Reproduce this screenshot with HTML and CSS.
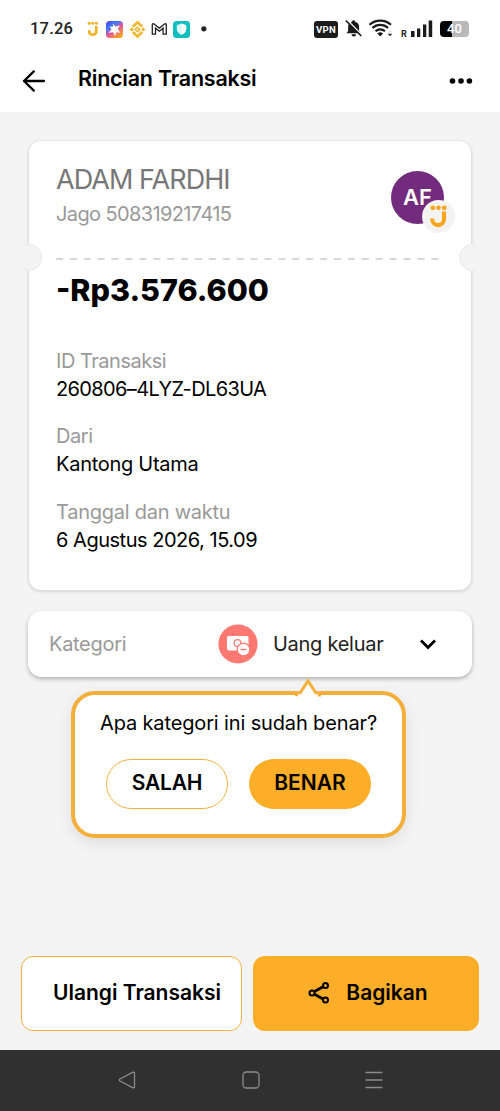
FILE: index.html
```html
<!DOCTYPE html>
<html lang="id">
<head>
<meta charset="utf-8">
<title>Rincian Transaksi</title>
<link rel="stylesheet" href="styles.css">
</head>
<body>
<div class="screen">
  <div class="status">
    <span class="clock">17.26</span>
    <svg class="notifs" width="124" height="20" viewBox="86 19 124 20">
      <defs>
        <linearGradient id="app" x1="0" y1="0" x2="0.7" y2="1">
          <stop offset="0" stop-color="#5b3df0"/><stop offset=".35" stop-color="#3c7df5"/><stop offset=".6" stop-color="#e0559a"/><stop offset="1" stop-color="#ffa51e"/>
        </linearGradient>
      </defs>
      <g fill="#f5b021"><circle cx="89.200" cy="23.200" r="1.500"/><circle cx="92.800" cy="23.200" r="1.500"/><circle cx="96.400" cy="23.200" r="1.500"/></g>
      <path d="M96.300 26v5.200a3.550 3.550 0 0 1-7.100 0v-.9" fill="none" stroke="#f5b021" stroke-width="2.700"/>
      <rect x="106" y="21" width="17" height="17" rx="3.500" fill="url(#app)"/>
      <path d="M112.800 23.500l2.700 3 4.300-1-2 3.800 2.600 3.400-4-.4-1.500 3.800-1.800-3.900-4.600.5 3-3.300-1.700-3 3.300.3z" fill="#fff"/>
      <g fill="none" stroke="#f0b62c" stroke-width="2.600"><path d="M132.800 26.800l4.700-4.400 4.700 4.400M132.800 32l4.700 4.400 4.700-4.400"/></g>
      <g fill="#f0b62c"><path d="M137.500 26l3.400 3.400-3.400 3.400-3.400-3.400zM131.800 27.200l2.200 2.200-2.200 2.200-2.200-2.200zM143.200 27.200l2.200 2.200-2.200 2.200-2.200-2.200z"/></g>
      <circle cx="137.500" cy="29.400" r="1" fill="#fff"/>
      <path d="M152.300 34.200V24.600q0-1 1.500-.8l5.500 4.300 5.500-4.300q1.500-.2 1.500.8v9.600h-3.200v-6l-3.800 3-3.800-3v6z" fill="#fff" stroke="#222" stroke-width="1.300"/>
      <rect x="173" y="21" width="17" height="17" rx="3.500" fill="#12bfc0"/>
      <path d="M181.500 23.600l4.700 1.700v3.700q0 3.800-4.700 5.800-4.700-2-4.700-5.800v-3.700z" fill="#d9fbfa"/><path d="M181.500 23.600l4.700 1.700v3.700q0 3.800-4.700 5.800z" fill="#fff"/>
      <circle cx="203.800" cy="28.800" r="2.600" fill="#222"/>
    </svg>
    <span class="grow"></span>
    <span class="vpn">VPN</span>
    <svg class="sys" width="94" height="20" viewBox="342 19 94 20">
      <path d="M346.500 33.200l1.600-2.200v-4a5.500 5.500 0 0 1 4-5.200v-.5a1.600 1.600 0 0 1 3 0v.5a5.500 5.500 0 0 1 4 5.200v4l1.600 2.200zM351.500 34.300h4.600a2.300 2.300 0 0 1-4.600 0z" fill="#1b1b1b"/>
      <path d="M347 19.800l15.500 16" stroke="#fff" stroke-width="1.600"/><path d="M345.800 20.500l15.500 15.500" stroke="#1b1b1b" stroke-width="1.700"/>
      <g fill="none" stroke="#1b1b1b" stroke-width="2.200"><path d="M369.500 24.700a16 16 0 0 1 21.500 0"/><path d="M372.400 28a11.500 11.500 0 0 1 15.700 0"/><path d="M375.500 31.200a7 7 0 0 1 9.500 0"/></g>
      <path d="M377.300 33.400a4.600 4.600 0 0 1 5.800 0l-2.900 3z" fill="#1b1b1b"/>
      <path d="M387.800 32.500l2.200-2.600 2.200 2.600z" fill="#ddd"/><path d="M387.800 33.800h4.400l-2.200 2.400z" fill="#222"/>
      <g fill="#1b1b1b"><rect x="411" y="31" width="3.600" height="6"/><rect x="417" y="28.500" width="3.300" height="8.500"/><rect x="423" y="24.500" width="3.300" height="12.500"/><rect x="428.700" y="20.500" width="3.500" height="16.500"/></g>
      <text x="401" y="37" class="roam">R</text>
    </svg>
    <span class="battery">40</span>
  </div>

  <div class="appbar">
    <svg width="24" height="24" viewBox="0 0 24 24" fill="none" stroke="#000" stroke-width="2.300" stroke-linecap="round" stroke-linejoin="round"><path d="M22 12H2M11.800 2.400L2 12l9.800 9.600"/></svg>
    <h1 class="title">Rincian Transaksi</h1>
    <svg width="24" height="8" viewBox="0 0 24 8"><circle cx="3.500" cy="4" r="2.800"/><circle cx="12" cy="4" r="2.800"/><circle cx="20.400" cy="4" r="2.800"/></svg>
  </div>

  <main class="main">
    <section class="receipt">
      <div class="payee">
        <div>
          <div class="name">ADAM FARDHI</div>
          <div class="account">Jago 508319217415</div>
        </div>
        <div class="avatar"><span class="initials">AF</span>
          <svg class="badge" width="33" height="33" viewBox="0 0 33 33"><circle cx="16.500" cy="16.500" r="16.500" fill="#f3f3f3"/><g fill="#f8a51b"><circle cx="10.800" cy="7.800" r="2.400"/><circle cx="16.500" cy="7.800" r="2.400"/><circle cx="22.200" cy="7.800" r="2.400"/></g><path d="M22 11.500v7.700a5.900 5.900 0 0 1-11.800 0v-.7" fill="none" stroke="#f8a51b" stroke-width="4.100"/></svg>
        </div>
      </div>
      <svg class="perforation" width="384" height="2" viewBox="0 0 384 2"><path d="M0 1h383" stroke="#ccc" stroke-width="1.700" stroke-dasharray="7 6.900"/></svg>
      <div class="amount">-Rp3.576.600</div>
      <dl class="details">
        <div><dt class="id-label">ID Transaksi</dt><dd class="id-value">260806–4LYZ-DL63UA</dd></div>
        <div><dt class="from-label">Dari</dt><dd class="from-value">Kantong Utama</dd></div>
        <div><dt class="date-label">Tanggal dan waktu</dt><dd class="date-value">6 Agustus 2026, 15.09</dd></div>
      </dl>
    </section>

    <section class="category">
      <span class="cat-label">Kategori</span>
      <svg class="cat-icon" width="40" height="40" viewBox="0 0 40 40"><circle cx="20" cy="20" r="19.600" fill="#ff7972"/><rect x="9" y="12" width="21.500" height="14.500" rx="1.800" fill="#fff"/><circle cx="19.500" cy="19" r="3.400" fill="#fff" stroke="#ff7972" stroke-width="1.200"/><circle cx="25.500" cy="25.500" r="6.300" fill="#fff" stroke="#ff7972" stroke-width="1.200"/><path d="M22.500 25.500h6" stroke="#ff7972" stroke-width="1.400"/></svg>
      <span class="cat-value">Uang keluar</span>
      <svg class="chevron" width="18" height="12" viewBox="0 0 18 12"><path d="M2 2.500l7 7 7-7" fill="none" stroke="#000" stroke-width="2.800"/></svg>
    </section>

    <section class="confirm">
      <svg class="pointer" width="28" height="20" viewBox="0 0 28 20"><path d="M3 13.500h22v4H3z" fill="#fff"/><path d="M4.500 17L14 3l9.500 14z" fill="#fff"/><path d="M2.500 18.500v-3.500H6L14 3l8 12h3.500v3.500" fill="none" stroke="#f4ae3a" stroke-width="3"/><path d="M4 16.500h20V20H1v-1.500h3z" fill="#fff"/></svg>
      <p class="question">Apa kategori ini sudah benar?</p>
      <div class="answers">
        <button class="pill no">SALAH</button>
        <button class="pill yes">BENAR</button>
      </div>
    </section>
  </main>

  <footer class="actions">
    <button class="action repeat">Ulangi Transaksi</button>
    <button class="action share">
      <svg width="22" height="24" viewBox="0 0 22 24" fill="none" stroke="#000" stroke-width="2"><path d="M6.500 10.500l9-5M6.500 13.200l9 5" stroke-width="2.800"/><circle cx="4" cy="12" r="2.500"/><circle cx="17.500" cy="4.500" r="2.500"/><circle cx="17.500" cy="19" r="2.500"/></svg>
      <span class="share-text">Bagikan</span>
    </button>
  </footer>

  <nav class="nav">
    <svg width="18" height="18" viewBox="0 0 18 18"><path d="M15 1.200L2 8q-1.500 1 0 2l13 6.800q1.500.5 1.500-1V2.200q0-1.500-1.500-1z"/></svg>
    <svg width="18" height="18" viewBox="0 0 18 18"><rect x="1" y="1" width="16" height="16" rx="3.500"/></svg>
    <svg width="18" height="18" viewBox="0 0 18 18"><path d="M.5 1.500h17M.5 9h17M.5 16.500h17"/></svg>
  </nav>
</div>
</body>
</html>
```
FILE: styles.css
```css
* { box-sizing: border-box; }
body { margin: 0; font-family: Inter, "Liberation Sans", sans-serif; color: #000; background: #f4f4f4; }
h1, p, dl, dd { margin: 0; }
button { font: inherit; color: inherit; padding: 0; border: 0; }
svg { flex: none; display: block; }
.screen { width: 500px; height: 1111px; display: flex; flex-direction: column; overflow: hidden; white-space: nowrap; }

.status { height: 56px; padding: 2px 31px 0 30px; display: flex; align-items: center; background: #fff; }
.clock { width: 56px; font: 500 16.500px/20px Roboto, sans-serif; letter-spacing: .2px; color: #222; }
.grow { flex: 1; }
.vpn { width: 24px; height: 17px; border-radius: 3px; background: #1b1b1b; color: #fff; font: 700 9.500px/17px Roboto, sans-serif; text-align: center; letter-spacing: .3px; }
.sys { margin-left: 4px; }
.roam { font: 700 9px Roboto, sans-serif; fill: #222; }
.battery { width: 29px; height: 16px; margin-left: 4px; border-radius: 4px; background: linear-gradient(90deg, #000 12px, #b9b9b9 12px); color: #fff; font: 500 13px/16px Roboto, sans-serif; text-align: center; }

.appbar { height: 56px; padding: 0 27px 0 22px; display: flex; align-items: center; background: #fff; }
.appbar svg { position: relative; top: -3px; }
.title { flex: 1; padding: 0 0 12px 32px; font-size: 21.500px; line-height: 30px; font-weight: 600; letter-spacing: -.24px; }

.main { flex: 1; padding: 29px 28px 0 28px; }
.receipt { position: relative; height: 449px; margin: 0 1px; padding: 22px 27px 0 27px; background: #fff; border-radius: 12px; box-shadow: 0 1px 3px 1px rgba(0,0,0,.12); }
.receipt::before, .receipt::after { content: ""; position: absolute; top: 103px; width: 27px; height: 27px; border-radius: 50%; background: #f4f4f4; box-shadow: inset 0 0 2px 1px #ebebeb; }
.receipt::before { left: -14px; clip-path: inset(0 0 0 9px); }
.receipt::after { right: -15px; clip-path: inset(0 9px 0 0); }
.payee { display: flex; justify-content: space-between; height: 95px; }
.name { font-size: 27px; line-height: 33px; color: #777; letter-spacing: -.95px; }
.account { font-size: 20px; line-height: 36px; color: #999; letter-spacing: -.62px; }
.avatar { position: relative; width: 53px; height: 53px; margin-top: 8px; border-radius: 50%; background: #722b7d; }
.initials { display: block; font-size: 22px; line-height: 53px; font-weight: 600; color: #fff; text-align: center; }
.badge { position: absolute; left: 31px; top: 29px; }
.amount { margin-top: 10px; font-size: 30.500px; line-height: 40px; font-weight: 800; }
.details { margin-top: 38px; display: grid; gap: 20px; font-size: 20px; line-height: 27.700px; }
.details dt { color: #999; }
.id-label { letter-spacing: -.48px; }
.id-value { letter-spacing: -.63px; }
.from-label { letter-spacing: -.4px; }
.from-value { letter-spacing: -.27px; }
.date-label { letter-spacing: -.25px; }
.date-value { letter-spacing: -.48px; }

.category { height: 66px; margin-top: 21px; padding: 0 35px 0 21px; display: flex; align-items: center; background: #fff; border-radius: 14px; box-shadow: 0 2px 4px rgba(0,0,0,.28); font-size: 20px; }
.cat-label { width: 169px; color: #999; letter-spacing: -.3px; }
.cat-value { margin-left: 15px; flex: 1; color: #222; letter-spacing: -.27px; }

.confirm { position: relative; width: 335px; height: 147px; margin: 14px 0 0 43px; padding: 14px 0 0; background: #fff; border: 4px solid #f4ae3a; border-radius: 24px; box-shadow: 0 5px 16px rgba(0,0,0,.09); }
.pointer { position: absolute; left: 219px; top: -17px; }
.question { padding-left: 25px; font-size: 20px; line-height: 28px; letter-spacing: -.14px; }
.answers { display: flex; gap: 21px; padding: 22px 0 0 31px; }
.pill { width: 122px; height: 50px; padding-bottom: 4px; border-radius: 25px; font-size: 21px; font-weight: 600; background: #fff; }
.no { border: 1.500px solid #f4b142; letter-spacing: -.2px; }
.yes { background: #fdae29; }

.actions { height: 94px; padding: 0 21px; display: flex; gap: 11px; }
.action { height: 75px; border-radius: 12px; font-size: 21px; font-weight: 600; padding-bottom: 3px; background: #fff; }
.repeat { width: 221px; padding-left: 11px; border: 1.500px solid #f4b142; }
.share { width: 226px; padding: 0 0 2px 4px; display: flex; align-items: center; justify-content: center; gap: 16px; background: #fdae29; }

.nav { height: 61px; padding: 0 117px 1px 118px; display: flex; align-items: center; justify-content: space-between; background: #303030; }
.nav svg { fill: none; stroke: #8c8c8c; stroke-width: 1.300; }
```
